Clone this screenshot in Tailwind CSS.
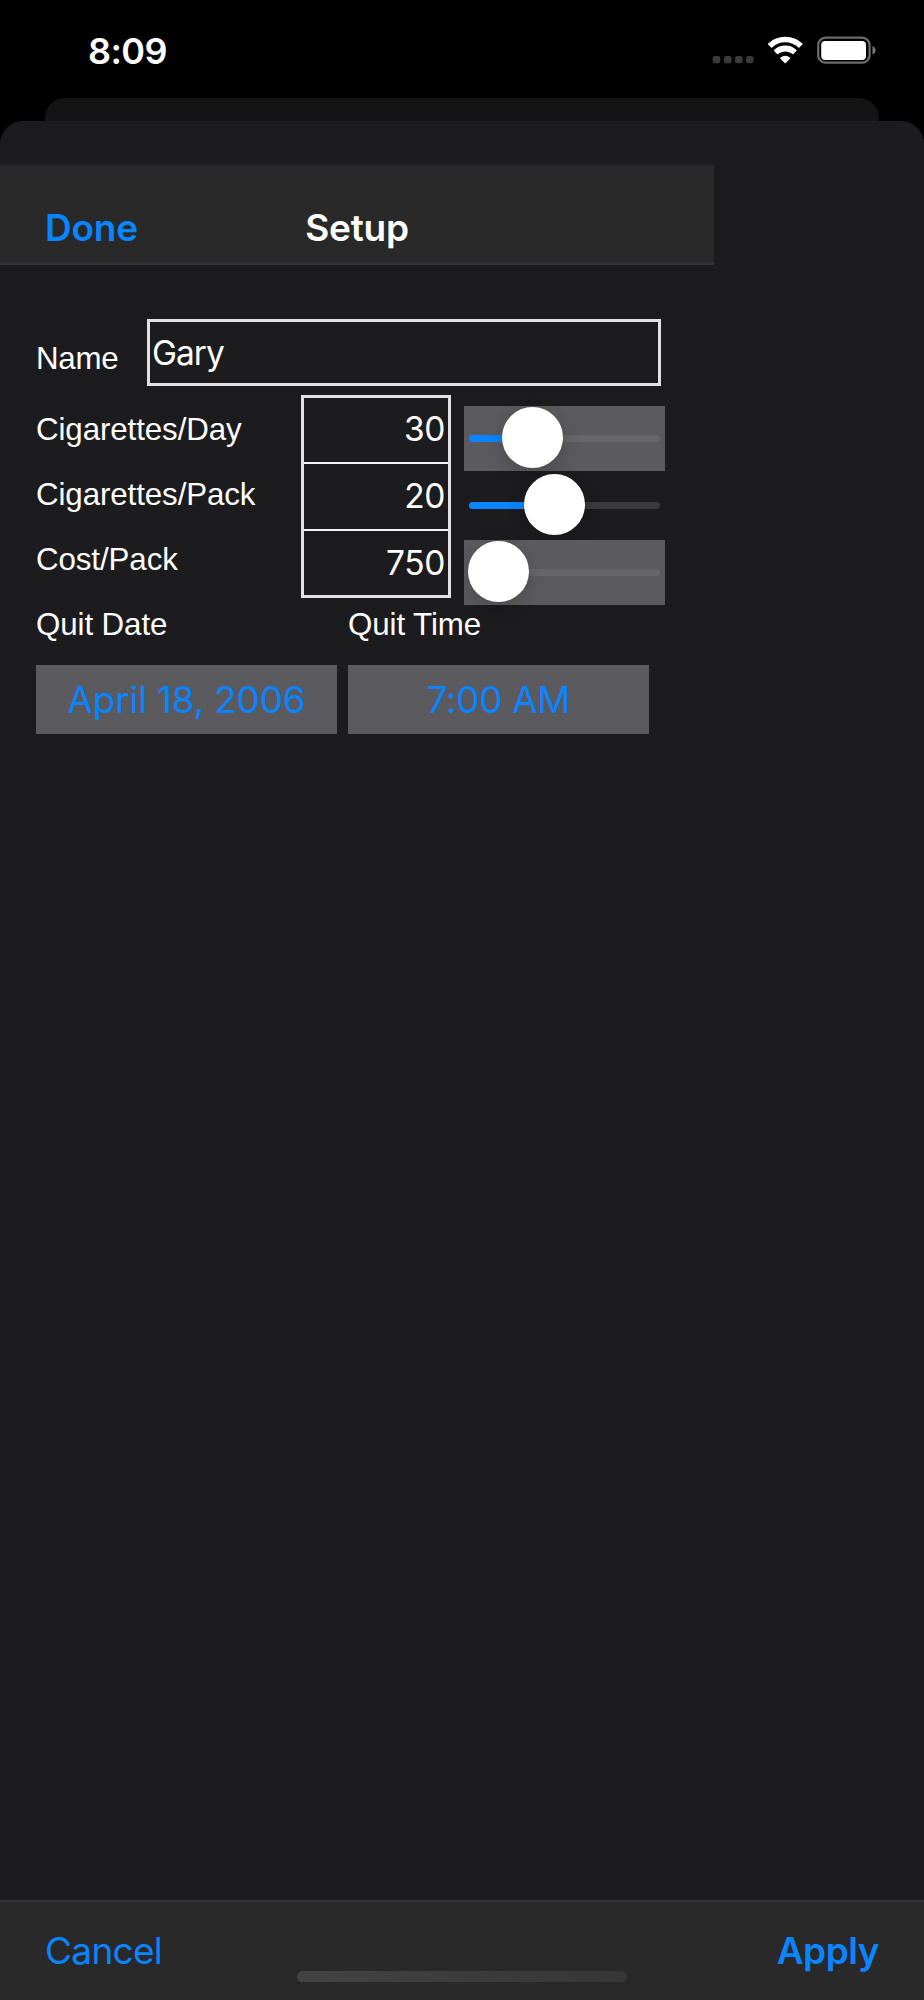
<!DOCTYPE html>
<html lang="en">
<head>
<meta charset="utf-8">
<title>Setup</title>
<script src="https://cdn.jsdelivr.net/npm/@tailwindcss/browser@4"></script>
</head>
<body class="bg-black">
<div class="flex h-[2000px] w-[924px] flex-col overflow-hidden bg-black font-['Inter',sans-serif] text-white">
  <!-- Status bar -->
  <header class="flex h-[98px] shrink-0 items-start justify-between pl-[88px] pr-[48px]">
    <div class="pt-[27px] text-[36px] leading-[48px] font-semibold tracking-[-0.6px] whitespace-nowrap">8:09</div>
    <svg class="mt-[32px] h-[36px] w-[168px]" viewBox="708 32 168 36" fill="none">
      <g fill="#3a3a3a">
        <rect x="712.7" y="56" width="7.6" height="7.3" rx="2.3"/><rect x="724" y="56" width="7.6" height="7.3" rx="2.3"/><rect x="735" y="56" width="7.6" height="7.3" rx="2.3"/><rect x="746" y="56" width="7.6" height="7.3" rx="2.3"/>
      </g>
      <g fill="#fff">
        <path d="M785.3 42.3c5 0 9.600 2 13.100 5.200.3.300.7.300 1 0l3-3c.3-.3.3-.8 0-1.100A25 25 0 0 0 785.300 36.800a25 25 0 0 0-17.200 6.600c-.3.300-.3.800 0 1.100l3 3c.3.300.7.300 1 0a19.200 19.200 0 0 1 13.200-5.200z"/>
        <path d="M785.3 51.400c2.700 0 5.200 1 7.100 2.700.3.300.7.300 1 0l3-3c.3-.3.3-.8 0-1.100a16.200 16.200 0 0 0-22.300 0c-.3.300-.3.800 0 1.100l3 3c.3.300.7.300 1 0 1.900-1.700 4.400-2.700 7.200-2.700z"/>
        <path d="M790 58.700c.3-.3.3-.8 0-1.100a7.500 7.500 0 0 0-9.500 0c-.3.300-.3.800 0 1.100l4.200 4.200c.3.300.8.300 1.100 0z"/>
      </g>
      <rect x="818.200" y="37.700" width="51.400" height="25" rx="7.500" stroke="#6c6c6c" stroke-width="2.200"/>
      <rect x="821.200" y="41" width="44.800" height="19" rx="4" fill="#fff"/>
      <path d="M872.500 46c1.800.7 3 2.400 3 4.300s-1.200 3.600-3 4.300z" fill="#7a7a7a"/>
    </svg>
  </header>
  <div class="mx-[45px] h-[45px] shrink-0 rounded-t-[20px] bg-[#141414]"></div>
  <!-- Sheet -->
  <main class="-mt-[22px] flex flex-1 flex-col rounded-t-[23px] bg-[#1c1c1e] pt-[44px]">
    <nav class="grid h-[100px] w-[714px] shrink-0 grid-cols-3 border-b-2 border-[#363638] bg-[#292929] pt-[39px] text-[37px] leading-[48px] font-semibold">
      <a class="pl-[45px] tracking-[-0.2px] text-[#0a84ff]">Done</a>
      <h1 class="text-center tracking-[-0.2px]">Setup</h1>
    </nav>

    <form class="flex flex-col">
      <div class="mt-[54px] flex h-[68px] pl-[36px]">
        <label class="w-[111px] pt-[8px] font-['Liberation_Sans',sans-serif] text-[31.3px] leading-[64px] tracking-[-0.3px]">Name</label>
        <div class="h-[67px] w-[514px] border-[3px] border-[#e2e2e2] pl-[2px] text-[33.500px] leading-[63px] tracking-[-1px]">Gary</div>
      </div>
      <div class="mt-[8px] flex h-[196px] pl-[36px]">
        <div class="w-[265px] pt-[3px] font-['Liberation_Sans',sans-serif] text-[31.3px] leading-[64.700px] tracking-[-0.1px]">
          <div>Cigarettes/Day</div>
          <div>Cigarettes/Pack</div>
          <div class="pt-px">Cost/Pack</div>
        </div>
        <div class="h-[203px] w-[150px] divide-y-2 divide-[#f4f4f4] border-[3px] border-[#e2e2e2] text-right text-[33.500px] tracking-[-0.4px]">
          <div class="h-[66px] pr-[3px] leading-[63px]">30</div>
          <div class="h-[67px] pr-[3px] leading-[65px]">20</div>
          <div class="h-[64px] pr-[3px] leading-[65px]">750</div>
        </div>
        <div class="ml-[13px] flex h-[210px] w-[201px] flex-col gap-[2px] pt-[11px]">
          <div class="relative h-[65px] shrink-0 bg-[#5b5a5f] px-[5px] pt-[29px]">
            <div class="h-[7px] rounded-full bg-[#67666b]"><div class="h-full w-[63px] rounded-full bg-[#0a84ff]"></div></div>
            <div class="absolute top-[1px] left-[38px] size-[61px] rounded-full bg-white shadow-[0_5px_18px_rgba(0,0,0,0.18)]"></div>
          </div>
          <div class="relative h-[65px] shrink-0 px-[5px] pt-[29px]">
            <div class="h-[7px] rounded-full bg-[#3a3a3d]"><div class="h-full w-[85px] rounded-full bg-[#0a84ff]"></div></div>
            <div class="absolute top-[1px] left-[60px] size-[61px] rounded-full bg-white shadow-[0_5px_18px_rgba(0,0,0,0.18)]"></div>
          </div>
          <div class="relative h-[65px] shrink-0 bg-[#5b5a5f] px-[5px] pt-[29px]">
            <div class="h-[7px] rounded-full bg-[#67666b]"></div>
            <div class="absolute top-[1px] left-[4px] size-[61px] rounded-full bg-white shadow-[0_5px_18px_rgba(0,0,0,0.18)]"></div>
          </div>
        </div>
      </div>
      <div class="relative grid h-[65px] grid-cols-[301px_301px] gap-x-[11px] pl-[36px] font-['Liberation_Sans',sans-serif] text-[31.3px] leading-[67px] tracking-[-0.1px]">
        <div>Quit Date</div>
        <div>Quit Time</div>
      </div>
      <div class="mt-[9px] grid grid-cols-[301px_301px] gap-x-[11px] pl-[36px] text-center text-[37px] leading-[70px] text-[#0a84ff]">
        <div class="h-[69px] bg-[#5b5a5f] tracking-[-0.25px]">April 18, 2006</div>
        <div class="h-[69px] bg-[#5b5a5f] tracking-[-0.4px]">7:00 AM</div>
      </div>
    </form>

    <footer class="relative mt-auto flex h-[100px] shrink-0 justify-between border-t-2 border-[#363638] bg-[#292929] px-[45px] pt-[25px] text-[37px] leading-[48px] text-[#0a84ff]">
      <a class="tracking-[-0.7px]">Cancel</a>
      <a class="font-semibold tracking-[-0.5px]">Apply</a>
      <div class="absolute top-[69px] left-[297px] h-[11px] w-[330px] rounded-full bg-linear-to-r from-[#434343] to-[#363636]"></div>
    </footer>
  </main>
</div>
</body>
</html>
